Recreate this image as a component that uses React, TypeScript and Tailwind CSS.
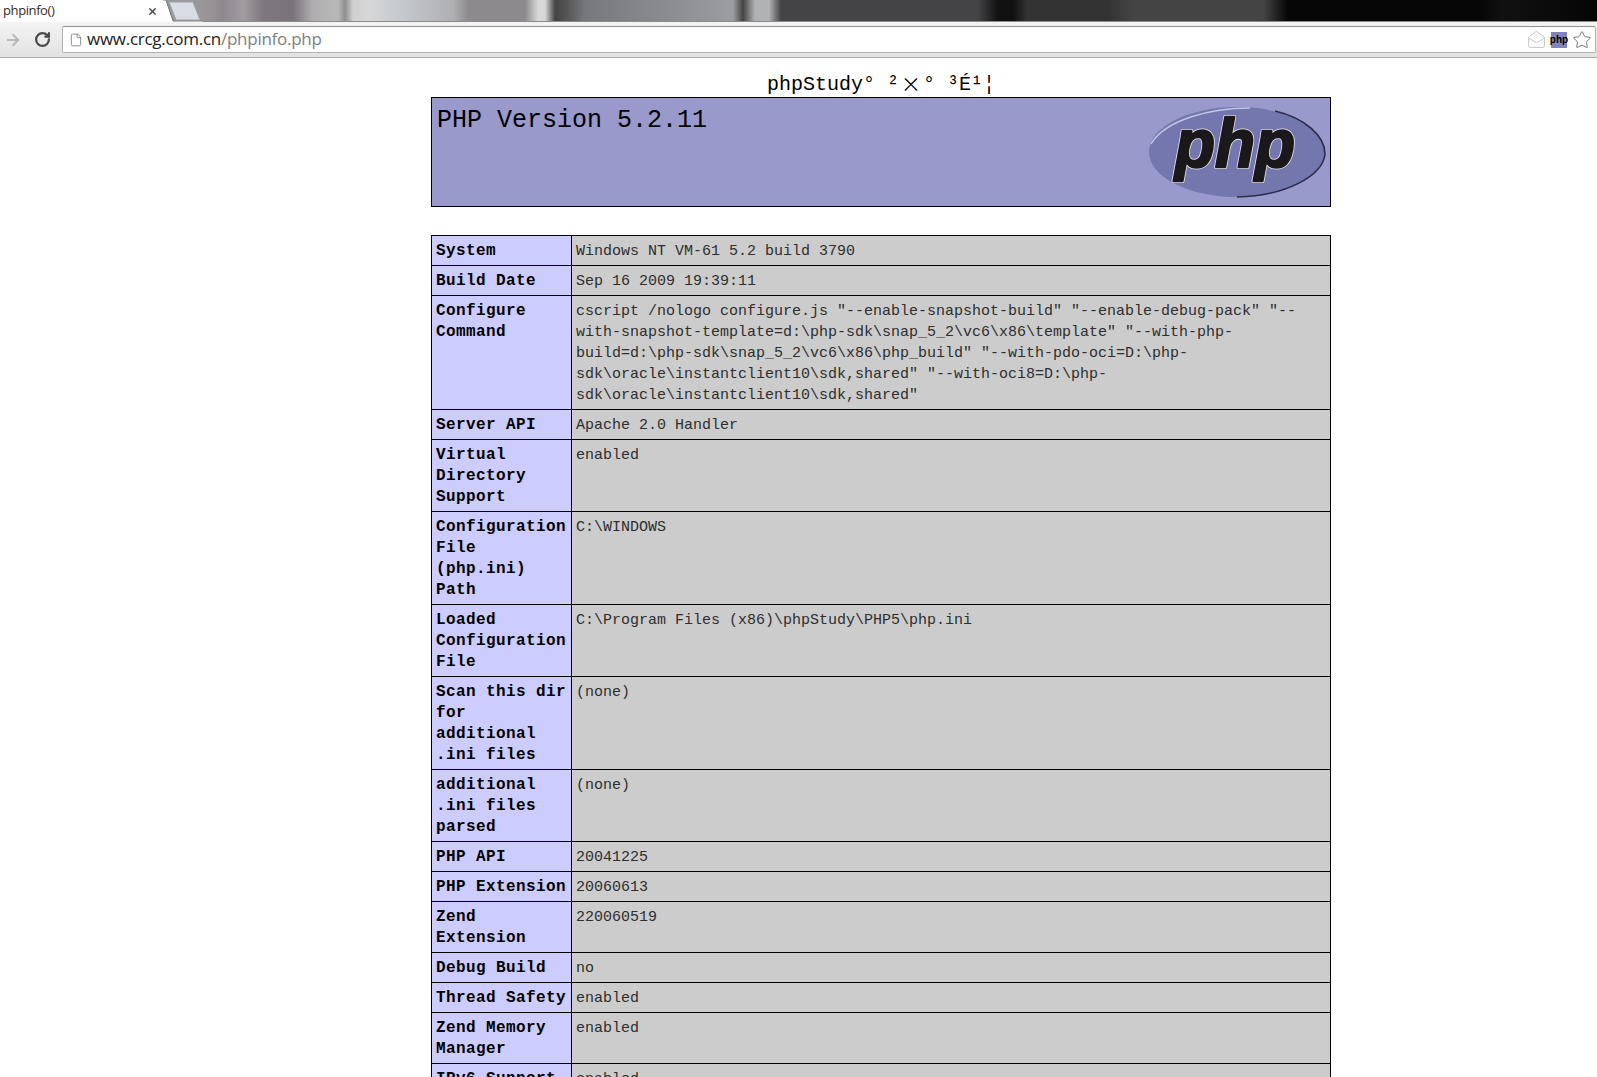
import { ArrowRight, File, MailOpen, RotateCw, Star, X } from 'lucide-react';
import { Fragment } from 'react';

const rows: { label: string[]; value: string[] }[] = [
  { label: ['System'], value: ['Windows NT VM-61 5.2 build 3790'] },
  { label: ['Build Date'], value: ['Sep 16 2009 19:39:11'] },
  {
    label: ['Configure', 'Command'],
    value: [
      'cscript /nologo configure.js "--enable-snapshot-build" "--enable-debug-pack" "--',
      'with-snapshot-template=d:\\php-sdk\\snap_5_2\\vc6\\x86\\template" "--with-php-',
      'build=d:\\php-sdk\\snap_5_2\\vc6\\x86\\php_build" "--with-pdo-oci=D:\\php-',
      'sdk\\oracle\\instantclient10\\sdk,shared" "--with-oci8=D:\\php-',
      'sdk\\oracle\\instantclient10\\sdk,shared"',
    ],
  },
  { label: ['Server API'], value: ['Apache 2.0 Handler'] },
  { label: ['Virtual', 'Directory', 'Support'], value: ['enabled'] },
  { label: ['Configuration', 'File', '(php.ini)', 'Path'], value: ['C:\\WINDOWS'] },
  { label: ['Loaded', 'Configuration', 'File'], value: ['C:\\Program Files (x86)\\phpStudy\\PHP5\\php.ini'] },
  { label: ['Scan this dir', 'for', 'additional', '.ini files'], value: ['(none)'] },
  { label: ['additional', '.ini files', 'parsed'], value: ['(none)'] },
  { label: ['PHP API'], value: ['20041225'] },
  { label: ['PHP Extension'], value: ['20060613'] },
  { label: ['Zend', 'Extension'], value: ['220060519'] },
  { label: ['Debug Build'], value: ['no'] },
  { label: ['Thread Safety'], value: ['enabled'] },
  { label: ['Zend Memory', 'Manager'], value: ['enabled'] },
  { label: ['IPv6 Support'], value: ['enabled'] },
];

function Lines({ lines }: { lines: string[] }) {
  return (
    <>
      {lines.map((line, i) => (
        <Fragment key={i}>
          {i > 0 && <br />}
          {line}
        </Fragment>
      ))}
    </>
  );
}

function PhpLogo() {
  const letters = {
    x: 0,
    y: 0,
    textLength: 120,
    lengthAdjust: 'spacingAndGlyphs' as const,
    fontFamily: '"Liberation Sans", sans-serif',
    fontSize: 68,
    fontWeight: 700,
    fontStyle: 'italic',
    strokeLinejoin: 'round' as const,
  };
  return (
    <svg width="182" height="96" viewBox="0 0 182 96" className="mt-[6px] shrink-0">
      <ellipse cx="92" cy="48" rx="88" ry="45" fill="#7377ad" />
      <path d="M6 40 C 20 16, 65 4, 105 4" fill="none" stroke="#c3c6e4" strokeWidth="1.4" />
      <path d="M130 7 C 160 14, 180 32, 180 50 C 178 72, 140 92, 92 93" fill="none" stroke="#2b2c46" strokeWidth="1.6" />
      <g transform="translate(30 63)">
        <text {...letters} fill="#e8e8f2" stroke="#e8e8f2" strokeWidth="4">
          php
        </text>
        <text {...letters} fill="#1a181b" stroke="#1a181b" strokeWidth="2.4">
          php
        </text>
      </g>
    </svg>
  );
}

export default function App() {
  return (
    <div className="h-[1077px] overflow-hidden bg-white">
      {/* Browser tabs */}
      <div className="flex h-[22px] bg-white">
        <div className="flex w-[163px] items-center justify-between pl-[3px] pr-[5px] font-['Open_Sans',sans-serif] text-[13px] tracking-[-0.4px] text-[#3a2a20]">
          <span>phpinfo()</span>
          <X size={11} strokeWidth={3} className="text-[#444]" />
        </div>
        <svg width="40" height="22" viewBox="0 0 40 22" className="shrink-0">
          <rect x="0" y="0" width="40" height="22" fill="#9a979a" />
          <path d="M0 0 L3 0 L10 21 L40 21 L40 22 L0 22 Z" fill="#ffffff" />
          <path d="M0 0 L3 0 L10 21 L40 21" fill="none" stroke="#7a7a7a" strokeWidth="1" />
          <path d="M6 2 L30 2 L37 20 L13 20 Z" fill="#d8dce4" stroke="#9ea3aa" strokeWidth="1" />
        </svg>
        <div className="flex-1 border-b border-[#8a8a8a] bg-[linear-gradient(90deg,#9a979a_0px,#8f898f_20px,#a09ca0_40px,#7e787e_60px,#7a747a_90px,#b0aeb0_110px,#b8b8b8_135px,#8f8f8f_142px,#d0d0d0_150px,#d8d8d8_165px,#c8ccd0_190px,#b0b0b4_250px,#8c8a8c_265px,#8c8a8c_322px,#d8d8d8_335px,#d8d8d8_342px,#444444_352px,#555555_364px,#77787c_382px,#8f9094_480px,#9c9da0_530px,#444444_540px,#b0b2b4_552px,#b0b2b4_566px,#444346_578px,#444346_775px,#111111_795px,#111111_810px,#333333_825px,#333333_905px,#444444_930px,#444444_1060px,#060606_1085px,#060606_1277px,#111111_1300px,#050505_1394px)]" />
      </div>

      {/* Address bar */}
      <div className="flex h-[36px] items-center border-b border-[#a9a9a9] bg-[linear-gradient(#f4f4f4,#e2e2e2)] py-1 pr-[1px]">
        <ArrowRight size={18} strokeWidth={2.5} className="ml-[4px] text-[#b9b9b9]" />
        <RotateCw size={17} strokeWidth={3.2} className="ml-[12px] text-[#4a4a4a]" />
        <div className="ml-[11px] flex h-[27px] flex-1 items-center rounded-[2px] border border-[#b3b3b3] border-t-[#8f8f8f] bg-white">
          <File size={14} strokeWidth={1.4} className="ml-[6px] text-[#777]" />
          <span className="ml-[4px] pb-[2px] font-['Open_Sans',sans-serif] text-[17px] tracking-[-0.27px] text-[#222]">
            www.crcg.com.cn<span className="text-[#808080]">/phpinfo.php</span>
          </span>
          <div className="ml-auto flex items-center">
            <MailOpen size={19} strokeWidth={1.2} className="text-[#c4c4c4]" />
            <span className="ml-[5px] flex h-4 w-4 items-center justify-center bg-[#8083bf] font-['Liberation_Sans',sans-serif] text-[10px] font-bold text-black">
              php
            </span>
            <Star size={20} strokeWidth={1.2} className="ml-[5px] mr-[3px] text-[#777]" />
          </div>
        </div>
      </div>

      {/* phpinfo page */}
      <div className="ml-[431px] w-[900px] font-['Liberation_Mono','Noto_Sans_CJK_SC',monospace] text-black">
        <div className="flex h-[39px] items-end justify-center text-[20px] leading-[24px]">
          <span>phpStudy° ²</span>
          <span className="inline-block w-6 pb-[3px] text-center font-['Inter',sans-serif] text-[30px] font-extralight leading-[24px]">×</span>
          <span>° ³É¹¦</span>
        </div>

        <div className="flex h-[110px] w-[900px] justify-between border border-black bg-[#9999cc] pr-[3px]">
          <h1 className="pl-[5px] pt-[7px] text-[25px] leading-[32px]">PHP Version 5.2.11</h1>
          <PhpLogo />
        </div>

        <table className="mt-7 w-[900px] table-fixed border-collapse">
          <colgroup>
            <col className="w-[140px]" />
            <col />
          </colgroup>
          <tbody>
            {rows.map((row) => (
              <tr key={row.label.join(' ')}>
                <td className="whitespace-nowrap border border-black bg-[#ccccff] pb-[3px] pl-1 pt-[5px] align-top text-[16px] font-bold leading-[21px] tracking-[0.4px]">
                  <Lines lines={row.label} />
                </td>
                <td className="whitespace-nowrap border border-black bg-[#cccccc] pb-[3px] pl-1 pt-[5px] align-top text-[15px] leading-[21px] text-[#2e2e2e]">
                  <Lines lines={row.value} />
                </td>
              </tr>
            ))}
          </tbody>
        </table>
      </div>
    </div>
  );
}
